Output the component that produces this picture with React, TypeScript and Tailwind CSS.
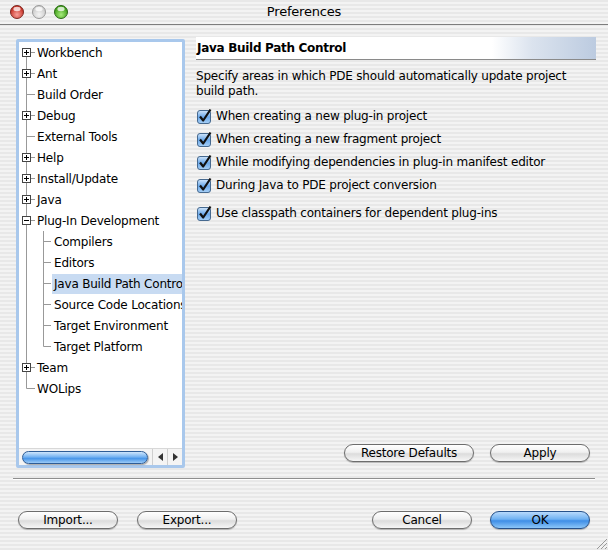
import React from 'react';

type Node = { label: string; level: 0 | 1; exp?: '+' | '-'; last?: boolean; first?: boolean; selected?: boolean };

const tree: Node[] = [
  { label: 'Workbench', level: 0, exp: '+', first: true },
  { label: 'Ant', level: 0, exp: '+' },
  { label: 'Build Order', level: 0 },
  { label: 'Debug', level: 0, exp: '+' },
  { label: 'External Tools', level: 0 },
  { label: 'Help', level: 0, exp: '+' },
  { label: 'Install/Update', level: 0, exp: '+' },
  { label: 'Java', level: 0, exp: '+' },
  { label: 'Plug-In Development', level: 0, exp: '-' },
  { label: 'Compilers', level: 1 },
  { label: 'Editors', level: 1 },
  { label: 'Java Build Path Control', level: 1, selected: true },
  { label: 'Source Code Locations', level: 1 },
  { label: 'Target Environment', level: 1 },
  { label: 'Target Platform', level: 1, last: true },
  { label: 'Team', level: 0, exp: '+' },
  { label: 'WOLips', level: 0, last: true },
];

const options = [
  'When creating a new plug-in project',
  'When creating a new fragment project',
  'While modifying dependencies in plug-in manifest editor',
  'During Java to PDE project conversion',
];

const pinstripe =
  'bg-[repeating-linear-gradient(to_bottom,#e8e8e8_0px,#e8e8e8_2px,#f3f3f3_2px,#f3f3f3_4px)]';

function TreeLines({ node }: { node: Node }) {
  const line = '#999';
  return (
    <svg width="36" height="21" className="shrink-0 absolute left-0 top-0">
      {node.level === 0 ? (
        <>
          <line x1="7.5" y1={node.first ? 6 : 0} x2="7.5" y2={node.last ? 10.5 : 21} stroke={line} />
          <line x1="7.5" y1="10.5" x2="16" y2="10.5" stroke={line} />
          {node.exp && (
            <>
              <rect x="3.5" y="6.5" width="8" height="8" fill="#fff" stroke="#444" />
              <line x1="5" y1="10.5" x2="10" y2="10.5" stroke="#000" />
              {node.exp === '+' && <line x1="7.5" y1="8" x2="7.5" y2="13" stroke="#000" />}
            </>
          )}
        </>
      ) : (
        <>
          <line x1="7.5" y1="0" x2="7.5" y2="21" stroke={line} />
          <line x1="24.5" y1="0" x2="24.5" y2={node.last ? 10.5 : 21} stroke={line} />
          <line x1="24.5" y1="10.5" x2="32" y2="10.5" stroke={line} />
        </>
      )}
    </svg>
  );
}

function Check() {
  return (
    <svg width="16" height="16" viewBox="0 0 16 16" className="shrink-0">
      <defs>
        <linearGradient id="cbg" x1="0" y1="0" x2="0" y2="1">
          <stop offset="0" stopColor="#d2e6fa" />
          <stop offset="0.5" stopColor="#6aa8ea" />
          <stop offset="1" stopColor="#a8d0f6" />
        </linearGradient>
      </defs>
      <rect x="0.5" y="2.5" width="13" height="13" rx="2.5" fill="url(#cbg)" stroke="#46698f" />
      <path d="M3 8.5 L6.2 12.5 L13.5 1.5" stroke="#111" strokeWidth="2.2" fill="none" strokeLinejoin="round" />
    </svg>
  );
}

function Light({ c1, c2, rim }: { c1: string; c2: string; rim: string }) {
  const id = 'l' + c1.slice(1);
  return (
    <svg width="14" height="14" viewBox="0 0 14 14">
      <defs>
        <radialGradient id={id} cx="0.5" cy="0.7" r="0.6">
          <stop offset="0" stopColor={c1} />
          <stop offset="1" stopColor={c2} />
        </radialGradient>
      </defs>
      <circle cx="7" cy="7" r="6.5" fill={`url(#${id})`} stroke={rim} />
      <ellipse cx="7" cy="4" rx="3.6" ry="2.2" fill="#fff" opacity="0.75" />
    </svg>
  );
}

function AquaButton({ label, w, primary }: { label: string; w: string; primary?: boolean }) {
  return (
    <button
      className={
        'h-[18px] rounded-full border text-[12px] leading-none tracking-[-0.2px] flex items-center justify-center shadow-[0_1px_1px_rgba(0,0,0,0.25)] ' +
        w +
        (primary
          ? ' border-[#26518a] bg-[linear-gradient(to_bottom,#b8dafc_0%,#6fb1f2_45%,#3f8ee6_55%,#8cc6f8_100%)]'
          : ' border-[#6d6d6d] bg-[linear-gradient(to_bottom,#ffffff_0%,#f0f0f0_45%,#dcdcdc_55%,#f6f6f6_100%)]')
      }
    >
      {label}
    </button>
  );
}

export default function App() {
  return (
    <div
      className={
        "relative w-[608px] h-[550px] overflow-hidden flex flex-col text-black font-['DejaVu_Sans',sans-serif] " +
        pinstripe
      }
    >
      {/* title bar */}
      <div className="relative h-[25px] shrink-0 flex items-center border-b border-[#7d7d7d]">
        <div className="flex items-center gap-[8px] pl-[10px]">
          <Light c1="#f7a09a" c2="#c42a1e" rim="#7d2a24" />
          <Light c1="#f4f4f4" c2="#c9c9c9" rim="#9a9a9a" />
          <Light c1="#a6ec7c" c2="#3b9a14" rim="#2d6a18" />
        </div>
        <div className="absolute inset-0 flex items-center justify-center text-[13px] tracking-[-0.2px]">
          Preferences
        </div>
      </div>

      {/* body */}
      <div className="h-[448px] shrink-0 flex">
        {/* tree */}
        <div className="ml-[16px] mt-[14px] w-[169px] h-[429px] border-[3px] border-[#a9c8ec] rounded-[2px] bg-white flex flex-col">
          <div className="flex-1 overflow-hidden text-[12px] tracking-[-0.2px]">
            {tree.map((n) => (
              <div key={n.label} className="relative h-[21px] flex items-center whitespace-nowrap">
                <TreeLines node={n} />
                {n.level === 0 ? (
                  <span className="pl-[18px]">{n.label}</span>
                ) : (
                  <span
                    className={
                      'ml-[33px] pl-[2px] flex-1 h-[20px] flex items-center overflow-hidden' +
                      (n.selected ? ' bg-[#c8dbf2]' : '')
                    }
                  >
                    {n.label}
                  </span>
                )}
              </div>
            ))}
          </div>
          {/* horizontal scrollbar */}
          <div className="h-[17px] shrink-0 flex items-center border-t border-[#d8d8d8] bg-[#f4f4f4]">
            <div className="ml-[3px] w-[126px] h-[13px] rounded-full border border-[#2f5d96] bg-[linear-gradient(to_bottom,#cfe6fc_0%,#7fb9f3_40%,#4a97e9_60%,#9ccbf7_100%)] shadow-[1px_1px_1px_rgba(0,0,0,0.3)]" />
            <div className="ml-auto flex h-full">
              <div className="w-[15px] flex items-center justify-center border-l border-[#cfcfcf]">
                <div className="w-0 h-0 border-y-[4px] border-y-transparent border-r-[5px] border-r-[#333]" />
              </div>
              <div className="w-[15px] flex items-center justify-center border-l border-[#cfcfcf]">
                <div className="w-0 h-0 border-y-[4px] border-y-transparent border-l-[5px] border-l-[#333]" />
              </div>
            </div>
          </div>
        </div>

        {/* right pane */}
        <div className="ml-[11px] w-[400px] pt-[12px] pb-[11px] flex flex-col">
          <div className="h-[23px] shrink-0 flex items-center pl-[1px] border-b border-[#8a8a8a] bg-[linear-gradient(to_right,#ffffff_0%,#ffffff_74%,#dbe3ee_84%,#bccbe0_100%)] text-[12px] font-bold tracking-[-0.3px]">
            Java Build Path Control
          </div>
          <p className="mt-[9px] text-[12px] leading-[15px] tracking-[-0.2px]">
            Specify areas in which PDE should automatically update project
            <br />
            build path.
          </p>
          <div className="mt-[5px] flex flex-col">
            {options.map((o) => (
              <div key={o} className="h-[23px] flex items-center gap-[3px] pl-[1px] text-[12px] tracking-[-0.2px]">
                <Check />
                <span>{o}</span>
              </div>
            ))}
            <div className="mt-[5px] h-[23px] flex items-center gap-[3px] pl-[1px] text-[12px] tracking-[-0.2px]">
              <Check />
              <span>Use classpath containers for dependent plug-ins</span>
            </div>
          </div>
          <div className="mt-auto flex justify-end gap-[16px] pr-[6px]">
            <AquaButton label="Restore Defaults" w="w-[130px]" />
            <AquaButton label="Apply" w="w-[100px]" />
          </div>
        </div>
      </div>

      {/* separator */}
      <div className="mt-[5px] mx-[13px] h-[2px] border-t border-[#8e8e8e] border-b border-b-white" />

      {/* bottom buttons */}
      <div className="mt-[31px] flex items-center pl-[18px] pr-[18px]">
        <AquaButton label="Import..." w="w-[100px]" />
        <div className="ml-[19px]">
          <AquaButton label="Export..." w="w-[100px]" />
        </div>
        <div className="ml-auto flex gap-[18px]">
          <AquaButton label="Cancel" w="w-[100px]" />
          <AquaButton label="OK" w="w-[100px]" primary />
        </div>
      </div>

      {/* resize grip */}
      <svg width="12" height="12" className="absolute right-[1px] bottom-[1px]">
        <line x1="2" y1="12" x2="12" y2="2" stroke="#999" />
        <line x1="6" y1="12" x2="12" y2="6" stroke="#999" />
        <line x1="10" y1="12" x2="12" y2="10" stroke="#999" />
      </svg>
    </div>
  );
}
